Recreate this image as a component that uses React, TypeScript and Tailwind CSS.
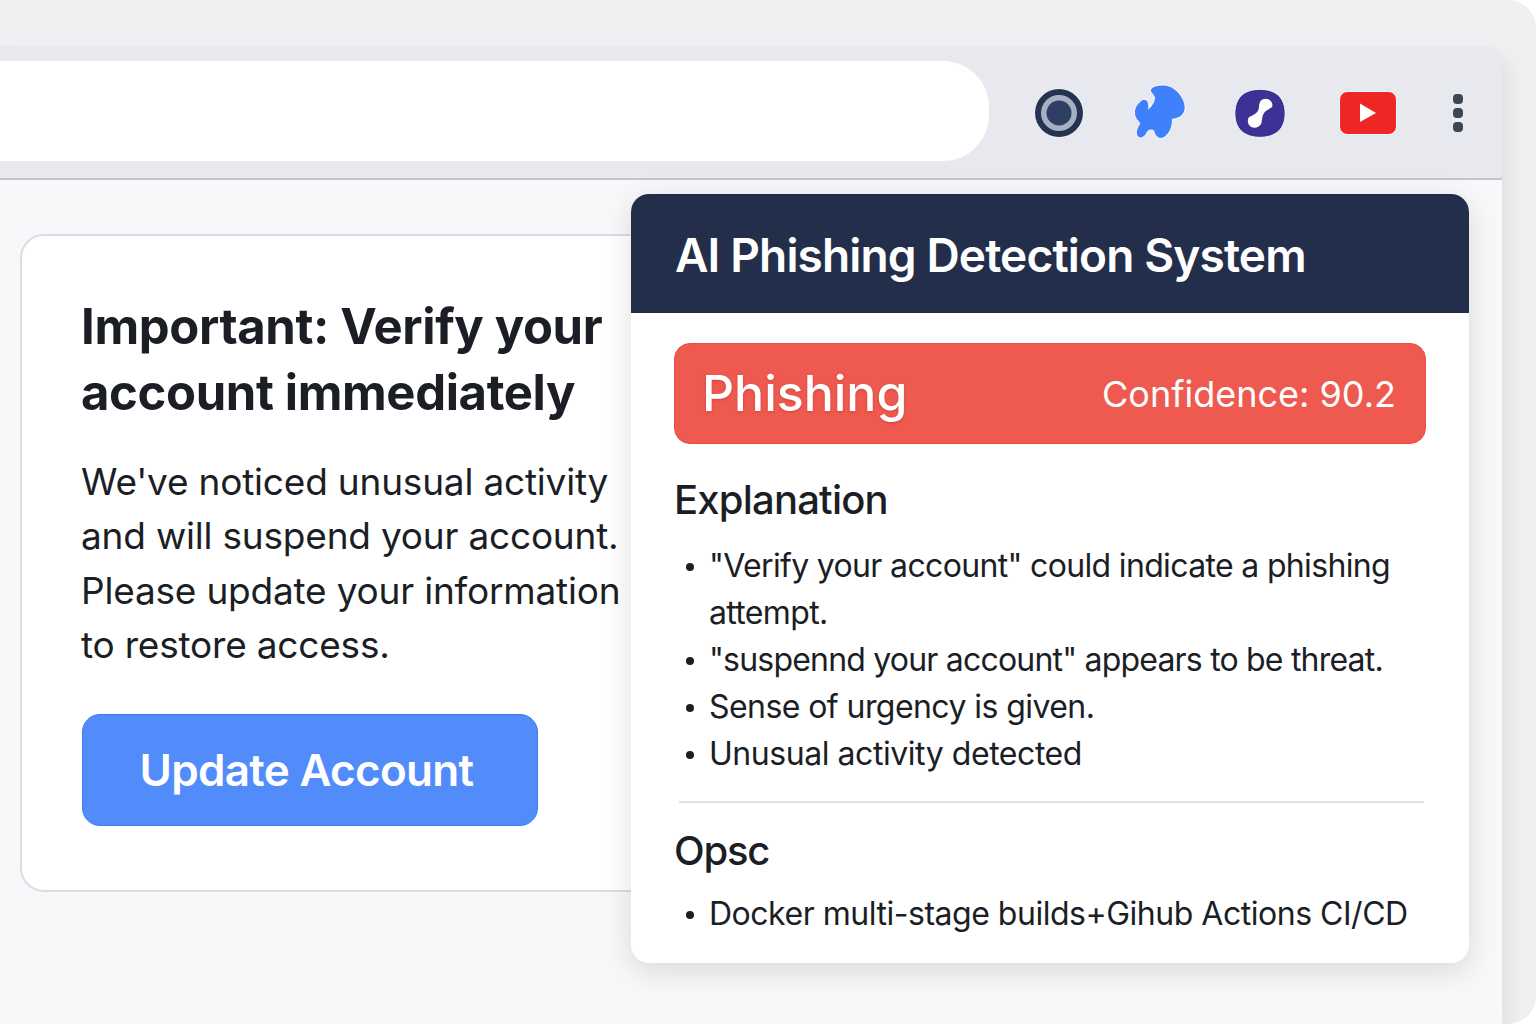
const points = [
  { text: '"Verify your account" could indicate a phishing attempt.', tracking: "tracking-[-0.66px]" },
  { text: '"suspennd your account" appears to be threat.', tracking: "tracking-[-0.8px]" },
  { text: "Sense of urgency is given.", tracking: "tracking-[-0.57px]" },
  { text: "Unusual activity detected", tracking: "tracking-[-0.45px]" },
];

const RecordIcon = () => (
  <svg width="50" height="50" viewBox="0 0 50 50" className="shrink-0">
    <circle cx="25" cy="25" r="24.5" fill="#f6f7fa" />
    <circle cx="25" cy="25" r="24" fill="#243350" />
    <circle cx="25" cy="25" r="18" fill="#a5b0c3" />
    <circle cx="25" cy="25" r="12.5" fill="#2f3f63" />
  </svg>
);

const BlobIcon = () => (
  <svg width="56" height="60" viewBox="40 25 160 170" className="shrink-0 -translate-y-[1px]">
    <path
      d="M92 47 C96 36 116 31 134 33 C160 36 184 58 191 88 C196 112 182 128 156 131 C156 150 150 170 134 182 C120 190 106 184 102 164 C96 160 88 160 84 168 C78 184 62 190 54 178 C48 168 56 152 62 142 C48 130 42 112 50 96 C56 82 72 68 82 76 C90 82 88 92 88 100 C96 92 104 80 104 70 C104 60 90 56 92 47 Z"
      fill="#3f80fc"
      stroke="#f6f7fa"
      strokeWidth="3"
    />
  </svg>
);

const LinkIcon = () => (
  <svg width="54" height="51" viewBox="340 38 162 154" className="shrink-0">
    <path
      d="M421 42 C470 42 497 68 497 115 C497 160 470 187 421 187 C372 187 345 160 345 115 C345 68 372 42 421 42 Z"
      fill="#3c3295"
      stroke="#f6f7fa"
      strokeWidth="3"
    />
    <path
      d="M415 107 C420 98 416 90 421 80 C427 68 447 67 454 78 C461 88 459 95 454 98 C445 104 436 108 431 117 C427 124 428 132 425 145 C418 160 396 162 388 150 C381 138 385 127 390 125 C400 120 410 116 415 107 Z"
      fill="#ffffff"
    />
  </svg>
);

const VideoIcon = () => (
  <svg width="58" height="44" viewBox="0 0 58 44" className="shrink-0">
    <rect x="0.5" y="0.5" width="57" height="43" rx="8" fill="#ee2724" stroke="#f6f7fa" />
    <path d="M21 12.5 L37 22 L21 31 Z" fill="#ffffff" />
  </svg>
);

const ListItem = ({ text, tracking }: { text: string; tracking: string }) => (
  <li className="flex">
    <span className="w-[35px] shrink-0 pl-[12px] pt-[21px]">
      <span className="block h-[8px] w-[8px] rounded-full bg-[#1b1e25]" />
    </span>
    <span className={tracking}>{text}</span>
  </li>
);

export default function App() {
  return (
    <div className="relative h-[1024px] w-[1536px] overflow-hidden bg-white font-['Inter',sans-serif] text-[#1b1e25]">
      {/* Outer frame */}
      <div className="h-full rounded-r-[28px] bg-[#f0f0f2] pt-[46px] pr-[34px]">
        <div className="flex h-full flex-col rounded-tr-[18px] bg-[#f8f8fa] shadow-[8px_8px_18px_rgba(0,0,0,0.06)]">
          {/* Toolbar */}
          <div className="flex h-[134px] shrink-0 items-start rounded-tr-[18px] border-b-2 border-[#c5c6cc] bg-[#e8e9ee] pt-[15px]">
            <div className="h-[100px] w-[989px] shrink-0 rounded-r-[46px] bg-white" />
            <div className="flex h-[100px] items-center pt-[4px]">
              <div className="ml-[45px]"><RecordIcon /></div>
              <div className="ml-[48px]"><BlobIcon /></div>
              <div className="ml-[45px]"><LinkIcon /></div>
              <div className="ml-[52px]"><VideoIcon /></div>
              <div className="ml-[56px] flex flex-col gap-[4px]">
                <span className="h-[10px] w-[10px] rounded-[4px] bg-[#3d4656]" />
                <span className="h-[10px] w-[10px] rounded-[4px] bg-[#3d4656]" />
                <span className="h-[10px] w-[10px] rounded-[4px] bg-[#3d4656]" />
              </div>
            </div>
          </div>

          {/* Page content */}
          <div className="pl-[20px] pt-[54px]">
            <div className="h-[658px] w-[700px] rounded-[24px] border-2 border-[#dcdce4] bg-white pl-[59px] pt-[58px]">
              <h1 className="text-[49px] font-bold leading-[66px] tracking-[-0.37px]">
                Important: Verify your
                <br />
                account immediately
              </h1>
              <p className="mt-[29px] text-[37px] leading-[54.25px] tracking-[-0.2px]">
                We've noticed unusual activity
                <br />
                and will suspend your account.
                <br />
                Please update your information
                <br />
                to restore access.
              </p>
              <button className="ml-[1px] mt-[42px] flex h-[112px] w-[456px] items-center justify-center rounded-[18px] border border-[#3b7af5] bg-[#528cfb] pr-[7px] text-[44px] font-semibold tracking-[-0.7px] text-white">
                Update Account
              </button>
            </div>
          </div>
        </div>
      </div>

      {/* Extension popup */}
      <div className="absolute left-[631px] top-[194px] h-[769px] w-[838px] overflow-hidden rounded-[18px] bg-white shadow-[0_8px_30px_rgba(0,0,0,0.13)]">
        <div className="flex h-[119px] items-center bg-[#232f4a] pl-[44px] pt-[4px]">
          <h2 className="text-[46px] font-semibold tracking-[-0.85px] text-white">AI Phishing Detection System</h2>
        </div>
        <div className="px-[43px] pt-[30px]">
          <div className="flex h-[101px] items-center justify-between rounded-[16px] border border-[#ee4c40] bg-[#ee5a50] pl-[27px] pr-[29px] text-white">
            <span className="text-[50px] font-medium [text-shadow:0_1px_3px_rgba(150,30,20,0.35)]">Phishing</span>
            <span className="text-[36px]">Confidence: 90.2</span>
          </div>
          <h3 className="mt-[28px] text-[40px] font-medium leading-[56px] tracking-[-0.8px]">Explanation</h3>
          <ul className="mt-[14px] text-[32px] leading-[47px]">
            {points.map((point) => (
              <ListItem key={point.text} text={point.text} tracking={point.tracking} />
            ))}
          </ul>
          <div className="ml-[5px] mr-[2px] mt-[24px] h-[2px] bg-[#e0e0e4]" />
          <h3 className="mt-[20px] text-[40px] font-medium leading-[56px] tracking-[-1.2px]">Opsc</h3>
          <ul className="mt-[11px] whitespace-nowrap text-[32px] leading-[47px]">
            <ListItem text="Docker multi-stage builds+Gihub Actions CI/CD" tracking="tracking-[-0.48px]" />
          </ul>
        </div>
      </div>
    </div>
  );
}
